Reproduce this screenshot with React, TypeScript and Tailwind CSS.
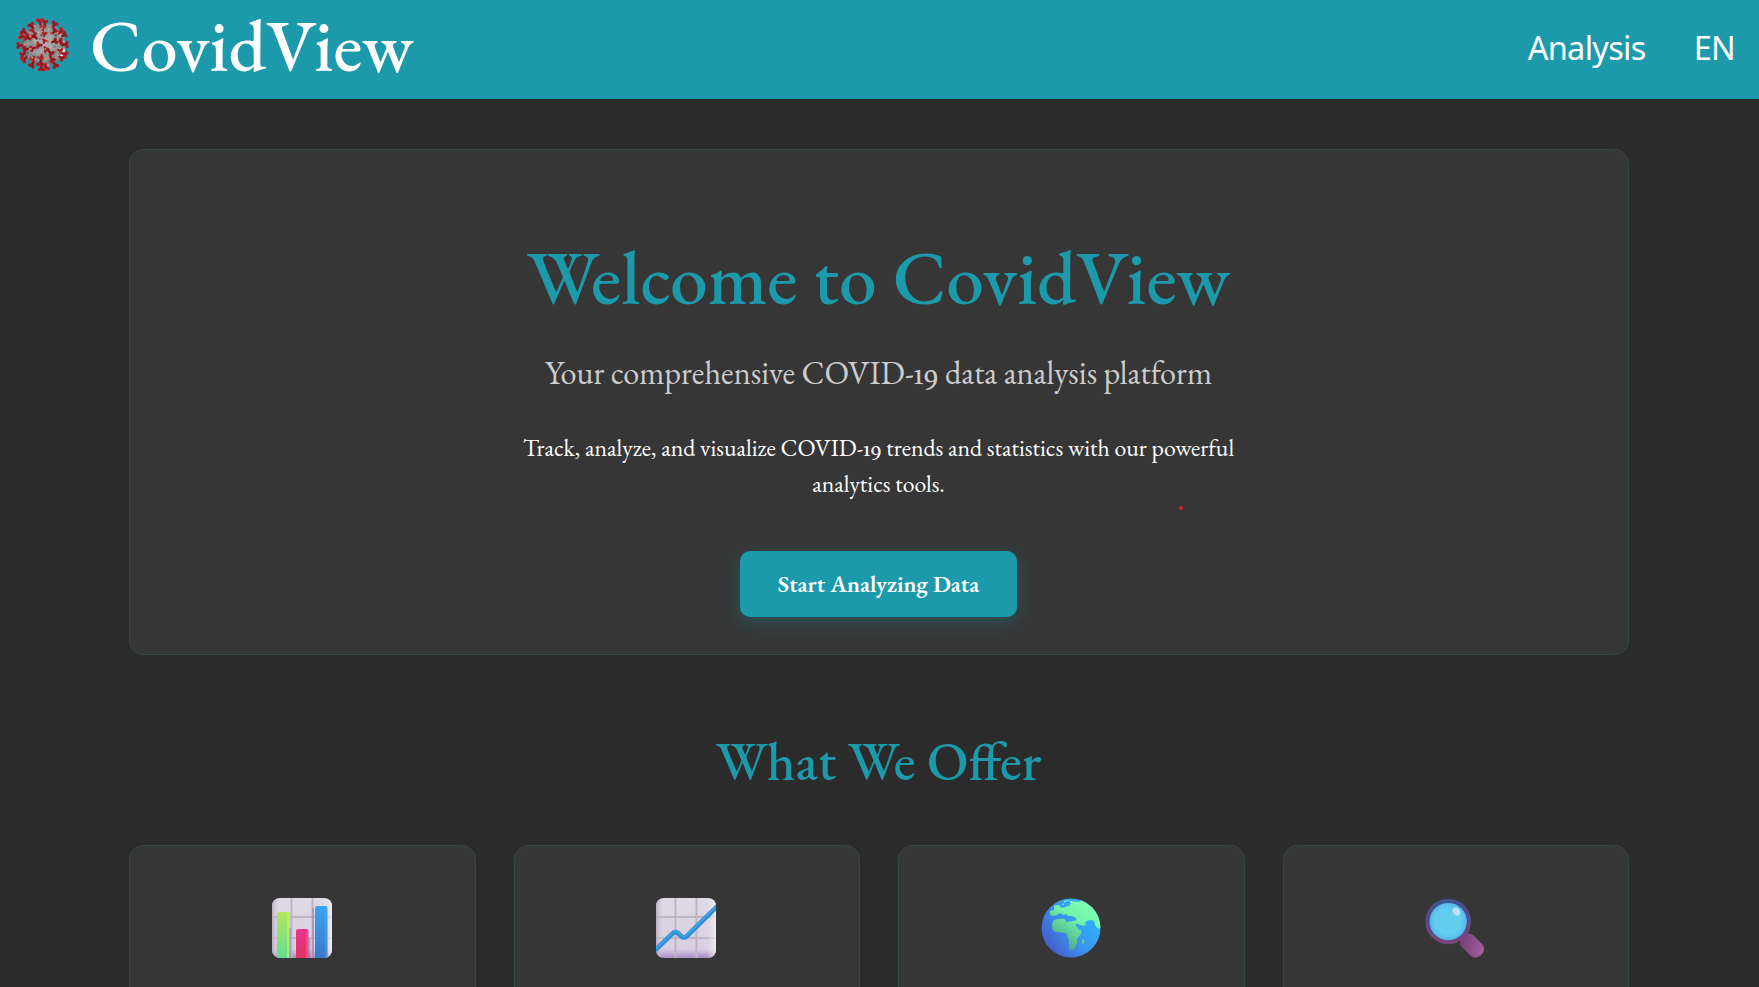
import React from 'react';

type Spike = { angle: number; radius: number; size: number };

const ring = (count: number, radius: number, size: number, offset: number): Spike[] =>
  Array.from({ length: count }, (_, i) => ({
    angle: (360 / count) * i + offset + (i % 3) * 4,
    radius: radius + (i % 2),
    size: size + (i % 3) * 0.12,
  }));

const spikes: Spike[] = [
  ...ring(3, 4, 0.85, 20),
  ...ring(6, 11, 0.9, 8),
  ...ring(10, 17, 0.95, 0),
  ...ring(18, 22.5, 1, 5),
];

function VirusLogo() {
  return (
    <svg className="h-[54px] w-[54px]" viewBox="-27 -27 54 54" aria-hidden="true">
      <defs>
        <radialGradient id="virusBody" cx="55%" cy="45%" r="60%">
          <stop offset="0" stopColor="#b0b0b0" />
          <stop offset="0.7" stopColor="#8a8c8d" />
          <stop offset="1" stopColor="#5a6063" />
        </radialGradient>
      </defs>
      <circle r="22" fill="url(#virusBody)" />
      {Array.from({ length: 70 }, (_, i) => {
        const a = i * 2.39996;
        const r = Math.sqrt(i / 70) * 21.5;
        return (
          <circle
            key={i}
            cx={Math.cos(a) * r}
            cy={Math.sin(a) * r}
            r={i % 3 === 0 ? 1.5 : 1}
            fill={['#cccccc', '#6b6e70', '#b3b3b3', '#404446'][i % 4]}
            opacity="0.6"
          />
        );
      })}
      <path d="M17 3l5 1-1 6-4 3 1-6z" fill="#f1f1f1" />
      {spikes.map((s, i) => (
        <g key={i} transform={`rotate(${s.angle}) translate(0 ${-s.radius}) scale(${s.size})`}>
          <path
            d="M-1 3.4L-1.3 .6L-3.3-.6Q-3.6-2.8-1.6-2.9L0-2.2L1.6-2.9Q3.6-2.8 3.3-.6L1.3 .6L1 3.4Z"
            fill={i % 3 === 0 ? '#bf252d' : '#a01e27'}
          />
          <path d="M-1.6-1.2L0 0L0 2.6" stroke="#6d151b" strokeWidth="0.8" fill="none" />
        </g>
      ))}
      {Array.from({ length: 16 }, (_, i) => {
        const a = i * 2.39996 + 1;
        const r = Math.sqrt((i + 1) / 16) * 19;
        return <circle key={i} cx={Math.cos(a) * r} cy={Math.sin(a) * r} r="0.9" fill="#f08a4b" />;
      })}
    </svg>
  );
}

function ChartPaper({ id }: { id: string }) {
  return (
    <>
      <defs>
        <linearGradient id={`${id}Paper`} x1="0" y1="0" x2="0" y2="1">
          <stop offset="0" stopColor="#dedae2" />
          <stop offset="0.85" stopColor="#d9cfe4" />
          <stop offset="1" stopColor="#a98fc4" />
        </linearGradient>
        <linearGradient id={`${id}Edge`} x1="0" y1="0" x2="1" y2="0">
          <stop offset="0" stopColor="#b4aabc" stopOpacity="0.9" />
          <stop offset="0.12" stopColor="#d8d0e0" stopOpacity="0" />
          <stop offset="0.85" stopColor="#efe8f0" stopOpacity="0" />
          <stop offset="1" stopColor="#f3ecf4" stopOpacity="0.9" />
        </linearGradient>
        <clipPath id={`${id}Clip`}>
          <rect width="60" height="60" rx="8" />
        </clipPath>
      </defs>
      <rect width="60" height="60" fill={`url(#${id}Paper)`} />
      <path d="M19.5 0V60M40.5 0V60M0 19H60M0 40H60" stroke="#bdb7c3" strokeWidth="2" />
      <rect width="60" height="60" fill={`url(#${id}Edge)`} />
    </>
  );
}

function BarChartIcon() {
  return (
    <svg className="h-[60px] w-[60px]" viewBox="0 0 60 60" aria-hidden="true">
      <defs>
        <linearGradient id="barGreen" x1="0" y1="0" x2="0" y2="1">
          <stop offset="0" stopColor="#b3e65a" />
          <stop offset="1" stopColor="#62de92" />
        </linearGradient>
        <linearGradient id="barPink" x1="0" y1="0" x2="0" y2="1">
          <stop offset="0" stopColor="#ec3391" />
          <stop offset="1" stopColor="#dc3560" />
        </linearGradient>
        <linearGradient id="barBlue" x1="0" y1="0" x2="0" y2="1">
          <stop offset="0" stopColor="#37a6f5" />
          <stop offset="1" stopColor="#3a78c9" />
        </linearGradient>
      </defs>
      <g clipPath="url(#barsClip)">
        <ChartPaper id="bars" />
        <path d="M18 30V60M37.5 40V60M41 10V60" stroke="#8e79a8" strokeWidth="2" opacity="0.5" />
        <path d="M5 60V16q0-2 2-2h8.500q2 0 2 2V60z" fill="url(#barGreen)" />
        <path d="M16 15.500V60" stroke="#c0fb62" strokeWidth="2" opacity="0.6" />
        <path d="M24 60V33q0-2 2-2h8.500q2 0 2 2V60z" fill="url(#barPink)" />
        <path d="M35 33V60" stroke="#fb5a98" strokeWidth="2" opacity="0.6" />
        <path d="M43 60V10q0-2 2-2h8.500q2 0 2 2V60z" fill="url(#barBlue)" />
        <path d="M54 10V60" stroke="#4fa4f2" strokeWidth="2" opacity="0.5" />
      </g>
    </svg>
  );
}

function TrendIcon() {
  return (
    <svg className="h-[60px] w-[60px]" viewBox="0 0 60 60" aria-hidden="true">
      <g clipPath="url(#trendClip)">
        <ChartPaper id="trend" />
        <path d="M-2 53.500L16.500 35.500Q19.500 32.500 22.500 35.500L25 38Q28 41 31 38L62 7.500" fill="none" stroke="#2e8fd8" strokeWidth="4.600" />
        <path d="M-2 52.500L16.500 34.500Q19.500 31.500 22.500 34.500L25 37Q28 40 31 37L62 6.500" fill="none" stroke="#3fa6e6" strokeWidth="1.500" />
      </g>
    </svg>
  );
}

function GlobeIcon() {
  return (
    <svg className="h-[60px] w-[60px]" viewBox="0 0 60 60" aria-hidden="true">
      <defs>
        <linearGradient id="ocean" x1="0.9" y1="0.35" x2="0.2" y2="0.85">
          <stop offset="0" stopColor="#2fb1ff" />
          <stop offset="0.5" stopColor="#3994ee" />
          <stop offset="1" stopColor="#4564cf" />
        </linearGradient>
        <linearGradient id="land" gradientUnits="userSpaceOnUse" x1="50" y1="8" x2="24" y2="48">
          <stop offset="0" stopColor="#7dffb0" />
          <stop offset="0.4" stopColor="#74f2ab" />
          <stop offset="1" stopColor="#4bac86" />
        </linearGradient>
        <clipPath id="globeClip">
          <circle cx="30" cy="30" r="29.500" />
        </clipPath>
      </defs>
      <circle cx="30" cy="30" r="29.500" fill="url(#ocean)" />
      <g clipPath="url(#globeClip)" fill="url(#land)">
        <path d="M23 5q3-3 8-2l7 1 4-3 20 5v22l-5 3-3-4q0-4-3-5-5 0-7 2l1 3q-3 1-6 0-4-2-5 0l2 2q1 2-2 1l-3-3 1-4 4-1-2-3-4-1-3 0-2-2-3 1-3-2-3 2-3 1-4-1v-4l4-1v-4q3-2 6 0l1 2q4-1 8-2l2-3-3-3-4 1v4h-2z" />
        <path d="M13 22q7-2 11-1l1 3 7-1 3 5 3 4 3 1q-1 4-5 8v4l-3 6q-3 2-5 0v-8l-3-8-8-1q-6 0-6-5 0-5 2-7z" />
        <path d="M41 42l2-1v3l-1 2h-1z" />
      </g>
    </svg>
  );
}

function MagnifierIcon() {
  return (
    <svg className="h-[60px] w-[60px]" viewBox="0 0 60 60" aria-hidden="true">
      <defs>
        <linearGradient id="rim" x1="0.5" y1="0" x2="0.5" y2="1">
          <stop offset="0" stopColor="#3d5591" />
          <stop offset="0.5" stopColor="#5d4a88" />
          <stop offset="1" stopColor="#78457f" />
        </linearGradient>
        <radialGradient id="glass">
          <stop offset="0.65" stopColor="#63cdee" />
          <stop offset="1" stopColor="#48b2e8" />
        </radialGradient>
        <linearGradient id="handle" x1="0.3" y1="0" x2="0.7" y2="1">
          <stop offset="0" stopColor="#75407b" />
          <stop offset="1" stopColor="#a45f9d" />
        </linearGradient>
      </defs>
      <rect x="-8.200" y="-13" width="16.400" height="26" rx="7" fill="url(#handle)" transform="translate(47 47.500) rotate(-45)" />
      <circle cx="23.200" cy="23.500" r="20.700" fill="url(#glass)" stroke="url(#rim)" strokeWidth="4.200" />
      <ellipse cx="31.500" cy="13.500" rx="3.500" ry="4.300" fill="#c3e1f6" transform="rotate(-35 31.500 13.500)" />
    </svg>
  );
}

function Nineteen() {
  return <span className="font-['Buenard','Liberation_Serif',serif] leading-none">19</span>;
}

const features = [BarChartIcon, TrendIcon, GlobeIcon, MagnifierIcon];

export default function App() {
  return (
    <div className="h-[987px] w-full overflow-hidden bg-[#2b2b2b] font-['EB_Garamond','Liberation_Serif',serif] text-white">
      <header className="flex h-[99px] items-start justify-between bg-[#1c9aab] pr-[24px] pl-[16px]">
        <div className="flex items-start gap-[20px]">
          <div className="pt-[18px]">
            <VirusLogo />
          </div>
          <span className="text-[72.5px] leading-[92px] font-medium whitespace-nowrap">CovidView</span>
        </div>
        <nav className="flex gap-[48px] font-['Noto_Sans',sans-serif] text-[32.5px] leading-[96px] tracking-[-0.7px]">
          <a>Analysis</a>
          <a>EN</a>
        </nav>
      </header>

      <main className="ml-[129px] w-[1500px]">
        <section className="mt-[50px] flex h-[506px] flex-col items-center rounded-[14px] border border-[#2f484c] bg-[#363636] pt-[83px] pr-px text-center">
          <h1 className="text-[75.6px] leading-[90px] font-medium whitespace-nowrap text-[#1c9aab]">Welcome to CovidView</h1>
          <p className="mt-[25px] text-[32.3px] leading-[50px] whitespace-nowrap text-[#cccccc]">
            Your comprehensive COVID-<Nineteen /> data analysis platform
          </p>
          <p className="mt-[32px] text-[23.8px] leading-[36px] whitespace-nowrap">
            Track, analyze, and visualize COVID-<Nineteen /> trends and statistics with our powerful
            <br />
            analytics tools.
          </p>
          <div className="relative mt-[49px]">
            <button className="h-[66px] w-[277px] rounded-[10px] bg-[#1c9aab] text-[23.5px] font-semibold whitespace-nowrap shadow-[0_5px_18px_rgba(28,154,171,0.3)]">
              Start Analyzing Data
            </button>
            <span className="absolute top-[-45px] left-[439px] h-[4px] w-[4px] rounded-full bg-[#e0201f]" />
          </div>
        </section>

        <h2 className="mt-[71px] pr-px text-center text-[54.3px] leading-[70px] font-medium text-[#1c9aab]">What We Offer</h2>

        <section className="mt-[49px] grid grid-cols-4 gap-[38px]">
          {features.map((Icon, i) => (
            <article key={i} className="flex h-[300px] justify-center rounded-[14px] border border-[#2f484c] bg-[#363636] pt-[52px] pr-px">
              <Icon />
            </article>
          ))}
        </section>
      </main>
    </div>
  );
}
